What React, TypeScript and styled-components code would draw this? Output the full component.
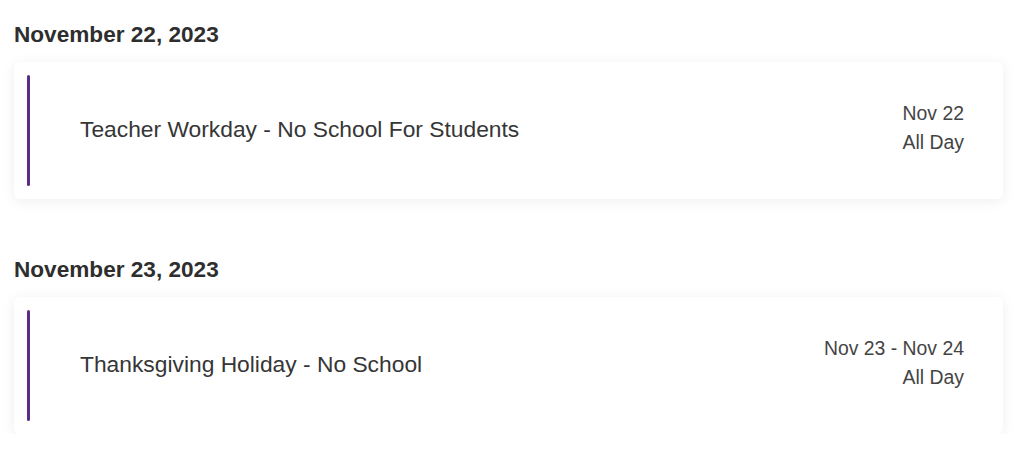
import styled, { createGlobalStyle } from "styled-components";

interface CalendarEvent {
  id: number;
  day: string;
  title: string;
  range: string;
  time: string;
}

const events: CalendarEvent[] = [
  {
    id: 1,
    day: "November 22, 2023",
    title: "Teacher Workday - No School For Students",
    range: "Nov 22",
    time: "All Day",
  },
  {
    id: 2,
    day: "November 23, 2023",
    title: "Thanksgiving Holiday - No School",
    range: "Nov 23 - Nov 24",
    time: "All Day",
  },
];

const GlobalStyle = createGlobalStyle`
  html, body {
    margin: 0;
    background: #ffffff;
    font-family: "Liberation Sans", Arial, sans-serif;
    color: #333333;
  }
`;

const Page = styled.main`
  display: flex;
  flex-direction: column;
  gap: 56px;
  padding: 20px 21px 0 14px;
`;

const DaySection = styled.section`
  display: flex;
  flex-direction: column;
  gap: 12px;
`;

const DayHeading = styled.h2`
  margin: 0;
  font-size: 22.6px;
  line-height: 30px;
  font-weight: 700;
  color: #2e2e2e;
`;

const EventCard = styled.article`
  display: flex;
  align-items: stretch;
  height: 137px;
  box-sizing: border-box;
  padding: 13px 39px 13px 13px;
  background: #ffffff;
  border-radius: 6px;
  box-shadow: 0 2px 14px rgba(0, 0, 0, 0.07);
`;

const AccentBar = styled.div`
  width: 3px;
  flex-shrink: 0;
  border-radius: 2px;
  background: #5b2d82;
`;

const EventTitle = styled.h3`
  flex: 1;
  margin: 0 0 4px 50px;
  align-self: center;
  font-size: 22.8px;
  line-height: 30px;
  font-weight: 400;
  color: #363636;
`;

const EventWhen = styled.div`
  display: flex;
  flex-direction: column;
  align-items: flex-end;
  align-self: center;
  padding-bottom: 5px;
  font-size: 19.4px;
  line-height: 29px;
  color: #444444;
`;

const App = () => {
  return (
    <>
      <GlobalStyle />
      <Page>
        {events.map((event) => (
          <DaySection key={event.id}>
            <DayHeading>{event.day}</DayHeading>
            <EventCard>
              <AccentBar />
              <EventTitle>{event.title}</EventTitle>
              <EventWhen>
                <span>{event.range}</span>
                <span>{event.time}</span>
              </EventWhen>
            </EventCard>
          </DaySection>
        ))}
      </Page>
    </>
  );
};

export default App;
